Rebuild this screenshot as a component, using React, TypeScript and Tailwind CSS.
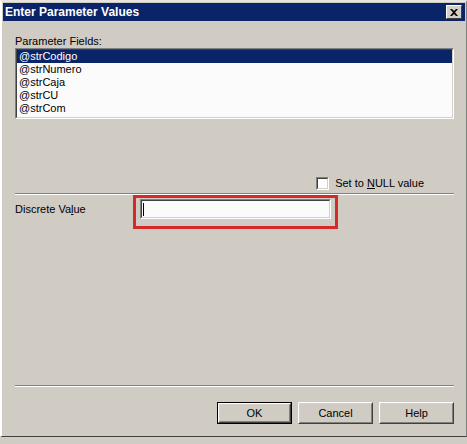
import React from 'react';

const font = { fontFamily: '"Liberation Sans", Tahoma, Arial, sans-serif' };

const fields = ['@strCodigo', '@strNumero', '@strCaja', '@strCU', '@strCom'];

function Button({ label, isDefault = false }: { label: string; isDefault?: boolean }) {
  return (
    <div className={`w-[75px] h-[22px] ${isDefault ? 'border border-black' : ''}`}>
      <div className="w-full h-full border border-t-white border-l-white border-r-[#404040] border-b-[#404040]">
        <div className="w-full h-full flex items-center justify-center border border-t-[#d4d0c8] border-l-[#d4d0c8] border-r-[#808080] border-b-[#808080] text-[11px] text-black">
          {label}
        </div>
      </div>
    </div>
  );
}

function Separator() {
  return (
    <div className="flex flex-col">
      <div className="h-px bg-[#808080]" />
      <div className="h-px bg-white" />
    </div>
  );
}

export default function App() {
  return (
    <div className="w-[467px] h-[444px] bg-[#d0cbc3] overflow-hidden select-none" style={font}>
      {/* window */}
      <div className="h-[437px] flex flex-col border-l-2 border-t-2 border-l-white border-t-[#e8e5e0] border-r border-r-[#808080] border-b border-b-[#404040]">
        {/* title bar */}
        <div className="mt-px mx-px h-[18px] bg-[#0a246a] flex items-center justify-between pl-[2px] pr-[3px]">
          <span className="text-white font-bold text-[12px] leading-none">Enter Parameter Values</span>
          <div className="w-[16px] h-[14px] bg-[#d4d0c8] border border-t-white border-l-white border-r-[#404040] border-b-[#404040] flex items-center justify-center">
            <svg width="8" height="7" viewBox="0 0 8 7">
              <path d="M0 0h2l2 2 2-2h2L5 3.5 8 7H6L4 5 2 7H0l3-3.5z" fill="#000" />
            </svg>
          </div>
        </div>

        <div className="flex-1 flex flex-col pl-[13px] pr-[12px]">
          <div className="mt-[14px] text-[11px] leading-[13px] text-black">Parameter Fields:</div>
          {/* listbox */}
          <div className="h-[71px] border border-t-[#808080] border-l-[#808080] border-r-white border-b-white">
            <div className="h-full bg-[#fbfbfb] border border-t-[#404040] border-l-[#404040] border-r-[#d4d0c8] border-b-[#d4d0c8]">
              {fields.map((f, i) => (
                <div
                  key={f}
                  className={`h-[13px] leading-[12px] text-[11px] pl-[2px] ${i === 0 ? 'bg-[#0a246a] text-white' : 'text-black'}`}
                >
                  {f}
                </div>
              ))}
            </div>
          </div>

          {/* null checkbox */}
          <div className="mt-[58px] flex items-center justify-end pr-[30px] gap-[6px]">
            <div className="w-[13px] h-[13px] border border-t-[#808080] border-l-[#808080] border-r-white border-b-white">
              <div className="w-full h-full bg-white border border-t-[#404040] border-l-[#404040] border-r-[#d4d0c8] border-b-[#d4d0c8]" />
            </div>
            <span className="text-[11px] leading-[13px] text-black">
              Set to <span className="underline">N</span>ULL value
            </span>
          </div>
          <div className="mt-[3px]">
            <Separator />
          </div>

          {/* discrete value */}
          <div className="flex items-start">
            <div className="w-[118px] pt-[8px] text-[11px] leading-[13px] text-black">
              Discrete Va<span className="underline">l</span>ue
            </div>
            <div className="w-[205px] border-[3px] border-[#d42a2a] pt-px pb-[7px] px-[4px]">
              <div className="h-[20px] border border-t-[#808080] border-l-[#808080] border-r-white border-b-white">
                <div className="h-full bg-[#fbfbfb] border border-t-[#404040] border-l-[#404040] border-r-[#d4d0c8] border-b-[#d4d0c8] flex items-center pl-[1px]">
                  <div className="w-px h-[13px] bg-black" />
                </div>
              </div>
            </div>
          </div>

          <div className="mt-auto">
            <Separator />
            <div className="mt-[15px] mb-[12px] flex justify-end gap-[6px]">
              <Button label="OK" isDefault />
              <Button label="Cancel" />
              <Button label="Help" />
            </div>
          </div>
        </div>
      </div>
    </div>
  );
}
